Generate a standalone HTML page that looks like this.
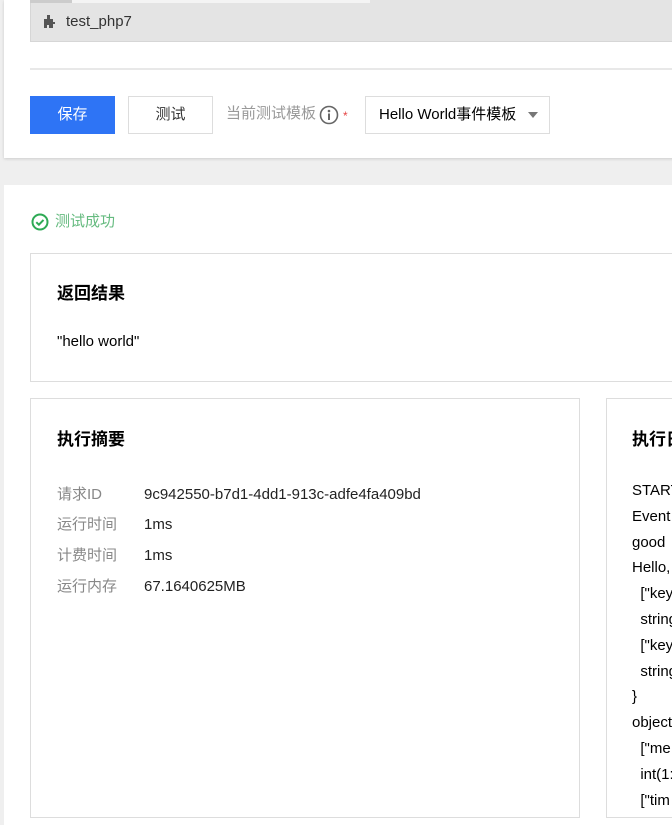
<!DOCTYPE html>
<html><head><meta charset="utf-8"><style>
*{margin:0;padding:0;box-sizing:border-box}
body{width:672px;height:800px;overflow:hidden;background:#efefef;font-family:"Liberation Sans","Noto Sans CJK SC",sans-serif;position:relative}
.abs{position:absolute;line-height:20px}
.p1{left:4px;top:0;width:680px;height:158px;background:#fff;box-shadow:0 1px 3px rgba(0,0,0,.15)}
.bar{left:30px;top:0;width:660px;height:42px;background:#e4e4e4;border-bottom:1px solid #d6d6d6;border-left:1px solid #d6d6d6}
.tab{left:30px;top:0;width:42px;height:3px;background:#ccc}
.tab2{left:72px;top:0;width:298px;height:3px;background:#f4f4f4}
.line{left:30px;top:68px;width:660px;height:2px;background:#e8e8e8}
.btn{top:96px;height:38px;font-size:15px;line-height:36px;text-align:center}
.p2{left:4px;top:185px;width:680px;height:640px;background:#fff}
.box{background:#fff;border:1px solid #ddd}
h3{font-size:17px;font-weight:bold;color:#000}
.lbl{color:#888;font-size:15px}
.val{color:#222;font-size:15px}
</style></head><body>
<div class="abs p1"></div>
<div class="abs bar"></div>
<div class="abs tab"></div><div class="abs tab2"></div>
<svg class="abs" style="left:43px;top:14px" width="16" height="14" viewBox="0 0 16 14"><path d="M1 5h3V1h3v4h3v3h2v2h-2v4H6v-3H4v3H1z" fill="#555"/></svg>
<div class="abs" style="left:66px;top:12px;font-size:15px;color:#333">test_php7</div>
<div class="abs line"></div>
<div class="abs btn" style="left:30px;width:85px;background:#2e74f5;color:#fff;line-height:38px">保存</div>
<div class="abs btn" style="left:128px;width:85px;border:1px solid #ddd;color:#333">测试</div>
<div class="abs" style="left:226px;top:104px;font-size:15px;color:#999">当前测试模板</div>
<svg class="abs" style="left:319px;top:105px" width="20" height="20" viewBox="0 0 20 20"><circle cx="10" cy="10" r="8.5" fill="none" stroke="#666" stroke-width="1.6"/><circle cx="10" cy="6" r="1.3" fill="#666"/><rect x="9" y="8.5" width="2" height="6.5" fill="#666"/></svg>
<div class="abs" style="left:343px;top:106px;font-size:12px;color:#e54545">*</div>
<div class="abs btn" style="left:365px;width:185px;border:1px solid #ddd;color:#000;text-align:left;padding-left:13px">Hello World事件模板</div>
<div class="abs" style="left:528px;top:112px;width:0;height:0;border-left:5px solid transparent;border-right:5px solid transparent;border-top:6px solid #777"></div>
<div class="abs p2"></div>
<svg class="abs" style="left:31px;top:213px" width="18" height="18" viewBox="0 0 18 18"><circle cx="9" cy="9" r="7.5" fill="none" stroke="#2eaa55" stroke-width="2"/><path d="M5.3 9.2l2.6 2.5 4.6-4.8" fill="none" stroke="#2eaa55" stroke-width="2"/></svg>
<div class="abs" style="left:55px;top:212px;font-size:15px;color:#66bb80">测试成功</div>
<div class="abs box" style="left:30px;top:253px;width:660px;height:129px"></div>
<h3 class="abs" style="left:57px;top:284px">返回结果</h3>
<div class="abs val" style="left:57px;top:332px;color:#000">"hello world"</div>
<div class="abs box" style="left:30px;top:398px;width:550px;height:420px"></div>
<h3 class="abs" style="left:57px;top:430px">执行摘要</h3>
<div class="abs lbl" style="left:57px;top:485px">请求ID</div><div class="abs val" style="left:144px;top:485px">9c942550-b7d1-4dd1-913c-adfe4fa409bd</div>
<div class="abs lbl" style="left:57px;top:515px">运行时间</div><div class="abs val" style="left:144px;top:515px">1ms</div>
<div class="abs lbl" style="left:57px;top:546px">计费时间</div><div class="abs val" style="left:144px;top:546px">1ms</div>
<div class="abs lbl" style="left:57px;top:577px">运行内存</div><div class="abs val" style="left:144px;top:577px">67.1640625MB</div>
<div class="abs box" style="left:606px;top:398px;width:100px;height:420px"></div>
<h3 class="abs" style="left:632px;top:430px;white-space:nowrap">执行日志</h3>
<div class="abs val" style="left:632px;top:478px;line-height:25.8px;color:#000;white-space:pre">START
Event
good
Hello,
  ["key
  string
  ["key
  string
}
object
  ["me
  int(1:
  ["tim</div>
</body></html>
